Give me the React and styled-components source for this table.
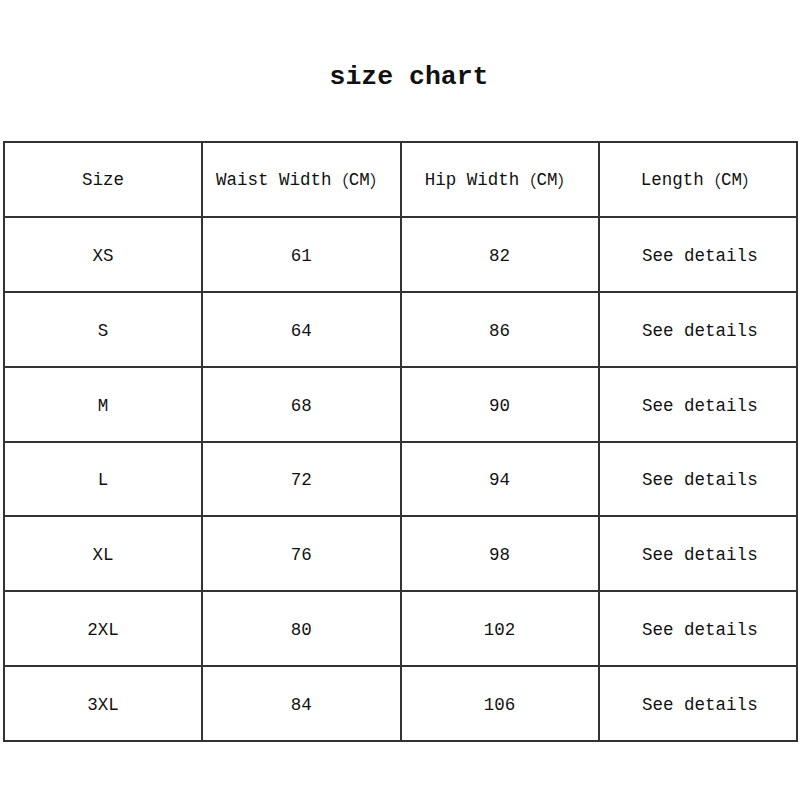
import React from "react";
import styled, { createGlobalStyle } from "styled-components";

const Global = createGlobalStyle`
  html, body { margin: 0; padding: 0; background: #fff; }
  body { width: 800px; height: 800px; overflow: hidden; }
`;

const Page = styled.div`
  width: 800px;
  height: 800px;
  background: #fff;
  padding-top: 61px;
  box-sizing: border-box;
  font-family: "Liberation Mono", "Noto Sans CJK SC", monospace;
  color: #111;
`;

const Title = styled.h1`
  margin: 0 0 48px 18px;
  text-align: center;
  font-size: 26.5px;
  line-height: 32px;
  font-weight: bold;
  font-family: "Liberation Mono", monospace;
`;

const Table = styled.div`
  margin-left: 3px;
  width: 795px;
  display: grid;
  grid-template-columns: repeat(4, 1fr);
  grid-auto-rows: 74.875px;
  border-top: 2px solid #333;
  border-left: 2px solid #333;
  box-sizing: border-box;
`;

const Cell = styled.div`
  box-sizing: border-box;
  border-right: 2px solid #333;
  border-bottom: 2px solid #333;
  display: flex;
  align-items: center;
  justify-content: center;
  font-size: 17.5px;
  white-space: nowrap;
  padding-top: ${(p) => (p.$head ? "2px" : "3px")};
  padding-left: ${(p) => (p.$col === 3 ? "4px" : "0")};
`;

const Paren = styled.span`
  font-family: "Noto Sans CJK SC", sans-serif;
  font-size: 17px;
`;

const rows = [
  ["XS", "61", "82"],
  ["S", "64", "86"],
  ["M", "68", "90"],
  ["L", "72", "94"],
  ["XL", "76", "98"],
  ["2XL", "80", "102"],
  ["3XL", "84", "106"],
];

const Head = ({ label }) => (
  <>
    {label}
    <Paren>（</Paren>CM<Paren>）</Paren>
  </>
);

export default function App() {
  return (
    <Page>
      <Global />
      <Title>size chart</Title>
      <Table>
        <Cell $head $col={0}>Size</Cell>
        <Cell $head $col={1}><Head label="Waist Width" /></Cell>
        <Cell $head $col={2}><Head label="Hip Width" /></Cell>
        <Cell $head $col={3}><Head label="Length" /></Cell>
        {rows.map((r) => (
          <React.Fragment key={r[0]}>
            <Cell $col={0}>{r[0]}</Cell>
            <Cell $col={1}>{r[1]}</Cell>
            <Cell $col={2}>{r[2]}</Cell>
            <Cell $col={3}>See details</Cell>
          </React.Fragment>
        ))}
      </Table>
    </Page>
  );
}
